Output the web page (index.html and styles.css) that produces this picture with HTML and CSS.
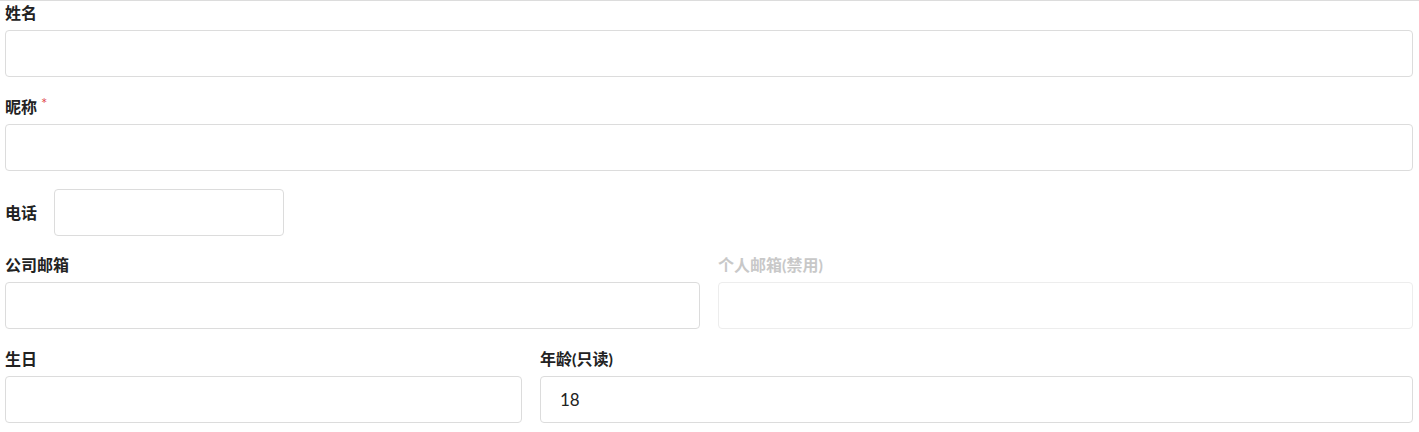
FILE: index.html
```html
<!DOCTYPE html>
<html lang="zh">
<head>
    <meta charset="UTF-8">
    <meta name="viewport" content="width=device-width, initial-scale=1.0">
    <title>表单</title>
    <link rel="stylesheet" href="styles.css">
</head>
<body>
    <form class="form">
        <div class="form-item">
            <label class="form-label">姓名</label>
            <input class="form-input" type="text">
        </div>

        <div class="form-item">
            <label class="form-label">昵称<span class="required">*</span></label>
            <input class="form-input" type="text">
        </div>

        <div class="form-item inline">
            <label class="form-label">电话</label>
            <input class="form-input phone" type="text">
        </div>

        <div class="form-row half">
            <div class="form-item">
                <label class="form-label">公司邮箱</label>
                <input class="form-input" type="text">
            </div>
            <div class="form-item disabled">
                <label class="form-label">个人邮箱(禁用)</label>
                <input class="form-input" type="text" disabled>
            </div>
        </div>

        <div class="form-row birth">
            <div class="form-item">
                <label class="form-label">生日</label>
                <input class="form-input" type="text">
            </div>
            <div class="form-item">
                <label class="form-label">年龄(只读)</label>
                <input class="form-input" type="text" value="18" readonly>
            </div>
        </div>
    </form>
</body>
</html>
```

FILE: styles.css
```css
body {
    margin: 0;
    font-family: Lato, "Noto Sans CJK SC", sans-serif;
    color: #222;
    background: #fff;
}
.form {
    border-top: 1px solid #dcdcdc;
    padding: 1px 6px 0 5px;
}
.form-item {
    margin-bottom: 19px;
}
.form-label {
    display: block;
    font-size: 16px;
    font-weight: 700;
    line-height: 22px;
    margin-bottom: 6px;
}
.required {
    color: #e0474c;
    font-size: 15px;
    font-weight: 400;
    vertical-align: top;
    margin-left: 4px;
    line-height: 14px;
}
.form-input {
    display: block;
    box-sizing: border-box;
    width: 100%;
    height: 47px;
    border: 1px solid #dcdcdc;
    border-radius: 4px;
    padding: 0 19px;
    font-family: Lato, "Noto Sans CJK SC", sans-serif;
    font-size: 17px;
    color: #222;
    background: #fff;
    outline: none;
}
.inline {
    display: flex;
    align-items: center;
    margin-top: -1px;
    margin-bottom: 18px;
}
.inline .form-label {
    margin: 0 17px 0 0;
}
.phone {
    width: 230px;
}
.form-row {
    display: grid;
    column-gap: 18px;
}
.half {
    grid-template-columns: 1fr 1fr;
}
.birth {
    grid-template-columns: 517px 1fr;
}
.disabled .form-label {
    color: #c8c8c8;
}
.disabled .form-input {
    border-color: #ededed;
    background: #fff;
}
```
